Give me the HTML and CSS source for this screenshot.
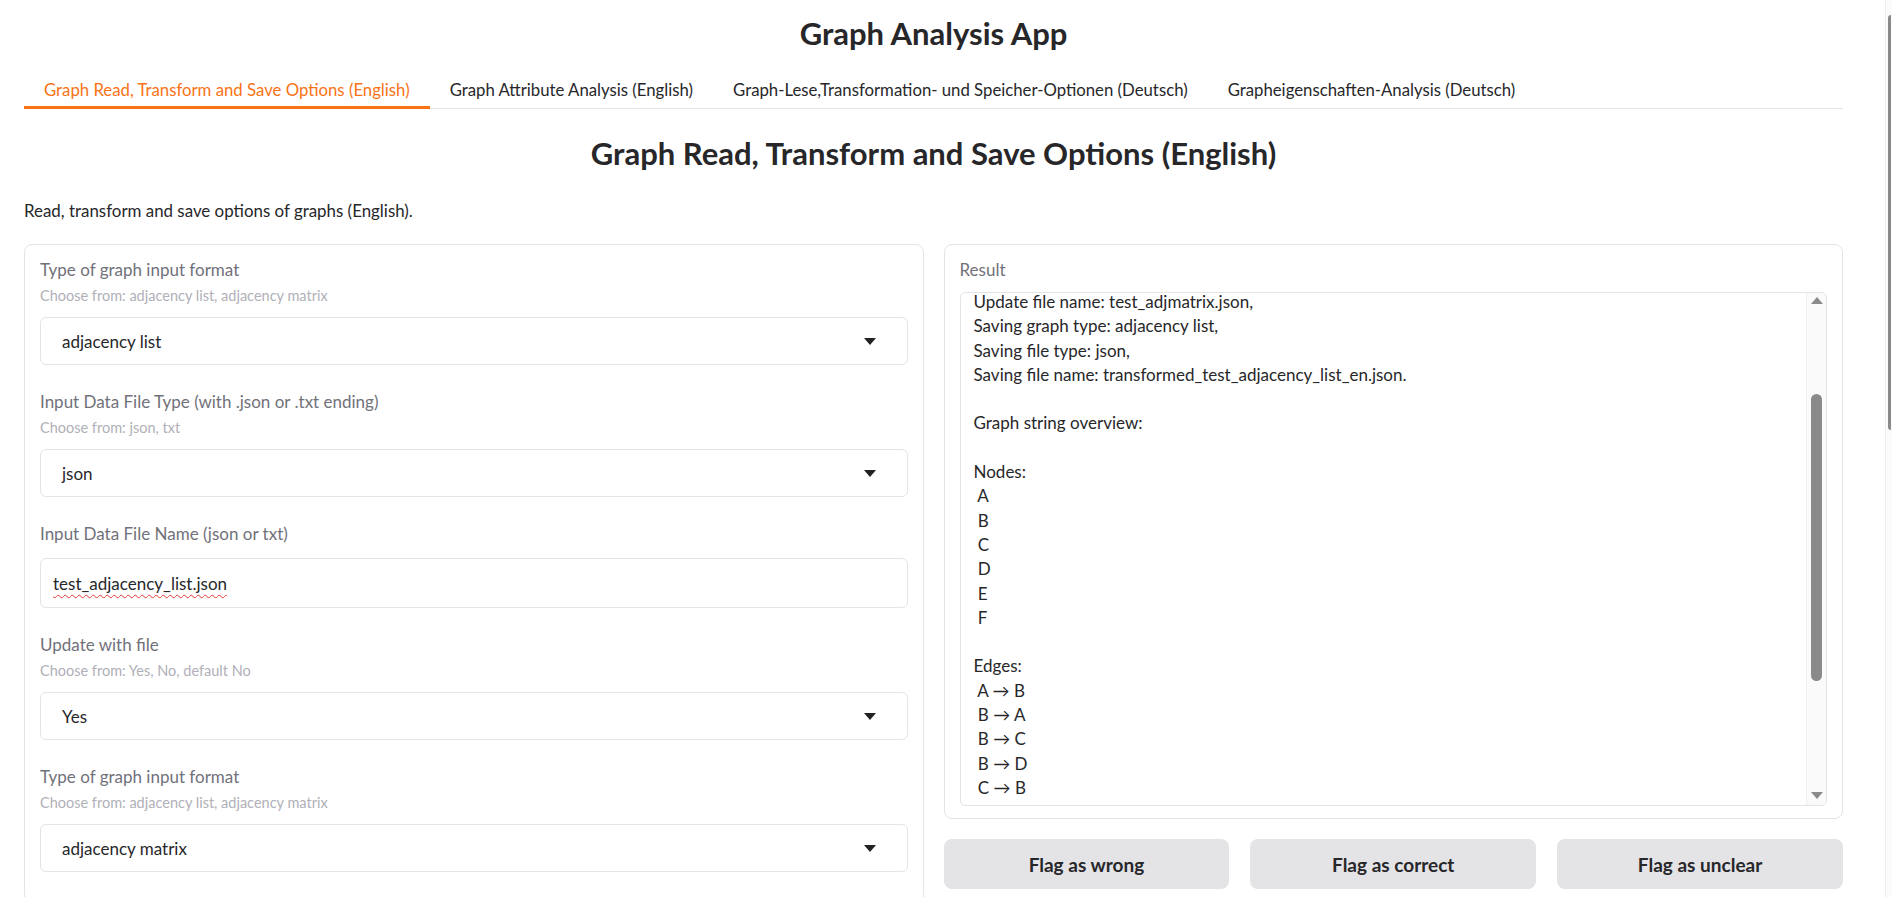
FILE: index.html
```html
<!DOCTYPE html>
<html lang="en">
<head>
    <meta charset="UTF-8">
    <meta name="viewport" content="width=device-width, initial-scale=1.0">
    <title>Graph Analysis App</title>
    <link rel="stylesheet" href="styles.css">
</head>
<body>
    <div class="app">
        <h1 class="app-title">Graph Analysis App</h1>

        <div class="tabs">
            <button class="tab active">Graph Read, Transform and Save Options (English)</button>
            <button class="tab">Graph Attribute Analysis (English)</button>
            <button class="tab">Graph-Lese,Transformation- und Speicher-Optionen (Deutsch)</button>
            <button class="tab">Grapheigenschaften-Analysis (Deutsch)</button>
        </div>

        <h2 class="page-title">Graph Read, Transform and Save Options (English)</h2>
        <p class="page-desc">Read, transform and save options of graphs (English).</p>

        <div class="columns">
            <div class="card inputs">
                <div class="field">
                    <div class="field-label">Type of graph input format</div>
                    <div class="field-info">Choose from: adjacency list, adjacency matrix</div>
                    <div class="dropdown"><span>adjacency list</span><span class="caret"></span></div>
                </div>
                <div class="field">
                    <div class="field-label">Input Data File Type (with .json or .txt ending)</div>
                    <div class="field-info">Choose from: json, txt</div>
                    <div class="dropdown"><span>json</span><span class="caret"></span></div>
                </div>
                <div class="field">
                    <div class="field-label">Input Data File Name (json or txt)</div>
                    <div class="textbox"><span class="misspelled">test_adjacency_list.json</span></div>
                </div>
                <div class="field">
                    <div class="field-label">Update with file</div>
                    <div class="field-info">Choose from: Yes, No, default No</div>
                    <div class="dropdown"><span>Yes</span><span class="caret"></span></div>
                </div>
                <div class="field">
                    <div class="field-label">Type of graph input format</div>
                    <div class="field-info">Choose from: adjacency list, adjacency matrix</div>
                    <div class="dropdown"><span>adjacency matrix</span><span class="caret"></span></div>
                </div>
            </div>

            <div class="output-col">
                <div class="card result">
                    <div class="field-label">Result</div>
                    <div class="result-box">
                        <div class="result-text">Update file name: test_adjmatrix.json,
Saving graph type: adjacency list,
Saving file type: json,
Saving file name: transformed_test_adjacency_list_en.json.

Graph string overview:

Nodes:
 A
 B
 C
 D
 E
 F

Edges:
 A → B
 B → A
 B → C
 B → D
 C → B</div>
                        <div class="scroll-track">
                            <span class="arrow up"></span>
                            <span class="thumb"></span>
                            <span class="arrow down"></span>
                        </div>
                    </div>
                </div>
                <div class="flag-row">
                    <button class="flag-btn">Flag as wrong</button>
                    <button class="flag-btn">Flag as correct</button>
                    <button class="flag-btn">Flag as unclear</button>
                </div>
            </div>
        </div>
    </div>

    <div class="page-scroll"><div class="page-thumb"></div></div>
</body>
</html>
```

FILE: styles.css
```css
body {
    margin: 0;
    height: 897px;
    overflow: hidden;
    display: flex;
    background-color: #fff;
    color: #27272a;
    font-family: 'Lato', 'DejaVu Sans', sans-serif;
}

.app {
    flex: 1;
    padding: 0 42px 0 24px;
}

.app-title {
    margin: 0;
    padding-top: 13px;
    font-size: 31px;
    line-height: 40px;
    font-weight: 700;
    text-align: center;
}

/* tabs */

.tabs {
    display: flex;
    margin-top: 19px;
    border-bottom: 1px solid #e4e4e7;
}

.tab {
    height: 37px;
    margin-bottom: -1px;
    padding: 0 20px;
    border: none;
    border-bottom: 3px solid transparent;
    background: none;
    font-family: 'Lato', 'DejaVu Sans', sans-serif;
    font-size: 16.75px;
    color: #27272a;
    cursor: pointer;
}

.tab.active {
    color: #f97316;
    border-bottom-color: #f97316;
}

.page-title {
    margin: 24px 0 0;
    font-size: 31px;
    line-height: 40px;
    font-weight: 700;
    text-align: center;
}

.page-desc {
    margin: 26px 0 0;
    font-size: 16.9px;
    line-height: 24px;
}

.columns {
    display: grid;
    grid-template-columns: 1fr 1fr;
    gap: 20px;
    align-items: start;
    margin-top: 21px;
}

.card {
    border: 1px solid #e4e4e7;
    border-radius: 8px;
    background-color: #fff;
}

/* left form */

.inputs {
    display: flex;
    flex-direction: column;
    gap: 26px;
    padding: 14px 15px 30px;
}

.field-label {
    font-size: 17px;
    line-height: 22px;
    color: #71717a;
}

.field-info {
    margin-top: 5px;
    font-size: 14.5px;
    line-height: 20px;
    color: #b0b0b8;
}

.dropdown {
    display: flex;
    align-items: center;
    justify-content: space-between;
    height: 46px;
    margin-top: 11px;
    padding: 0 31px 0 21px;
    border: 1px solid #e4e4e7;
    border-radius: 6px;
    font-size: 17px;
}

.caret {
    width: 0;
    height: 0;
    border-left: 6px solid transparent;
    border-right: 6px solid transparent;
    border-top: 7px solid #222;
}

.textbox {
    display: flex;
    align-items: center;
    height: 48px;
    margin-top: 13px;
    padding-left: 12px;
    border: 1px solid #e4e4e7;
    border-radius: 6px;
    font-size: 17px;
}

.misspelled {
    text-decoration: underline wavy #e53935;
    text-decoration-thickness: 1px;
    text-underline-offset: 4px;
}

/* right column */

.output-col {
    display: flex;
    flex-direction: column;
    gap: 20px;
}

.result {
    padding: 14px 15px 12px;
}

.result-box {
    display: flex;
    height: 512px;
    margin-top: 11px;
    border: 1px solid #e4e4e7;
    border-radius: 5px;
    overflow: hidden;
}

.result-text {
    flex: 1;
    margin-top: -3px;
    padding-left: 13px;
    font-size: 17px;
    line-height: 24.3px;
    white-space: pre;
    color: #27272a;
}

.scroll-track {
    display: flex;
    flex-direction: column;
    align-items: center;
    width: 19px;
    padding: 4px 0 6px;
    background-color: #fafafa;
    border-left: 1px solid #f0f0f0;
}

.arrow {
    width: 0;
    height: 0;
    border-left: 6px solid transparent;
    border-right: 6px solid transparent;
}

.arrow.up {
    border-bottom: 7px solid #8a8a8a;
}

.arrow.down {
    margin-top: auto;
    border-top: 7px solid #8a8a8a;
}

.thumb {
    width: 11px;
    height: 287px;
    margin-top: 90px;
    border-radius: 6px;
    background-color: #8a8a8a;
}

.flag-row {
    display: flex;
    gap: 21px;
}

.flag-btn {
    flex: 1;
    height: 50px;
    border: none;
    border-radius: 8px;
    background-color: #e4e4e7;
    font-family: 'Lato', 'DejaVu Sans', sans-serif;
    font-size: 19px;
    font-weight: 700;
    color: #27272a;
    cursor: pointer;
}

/* page scrollbar edge */

.page-scroll {
    width: 6px;
    border-left: 1px solid #ededed;
    background-color: #fbfbfb;
}

.page-thumb {
    width: 3px;
    height: 415px;
    margin: 15px 0 0 2px;
    border-radius: 3px 0 0 3px;
    background-color: #8a8a8a;
}
```
